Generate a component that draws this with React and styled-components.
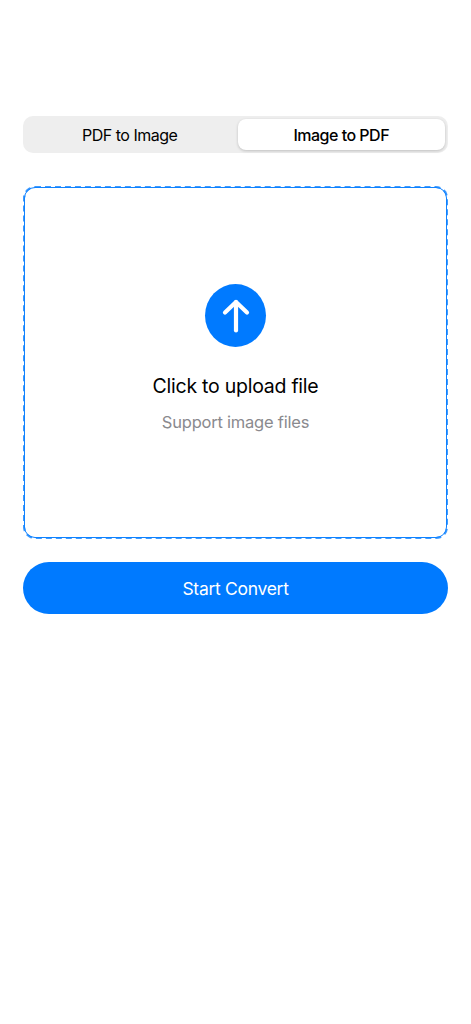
import React from "react";
import styled, { createGlobalStyle } from "styled-components";

const Global = createGlobalStyle`
  html, body { margin: 0; padding: 0; background: #fff; }
  body { font-family: Inter, "Liberation Sans", sans-serif; -webkit-font-smoothing: antialiased; }
`;

const Page = styled.div`
  box-sizing: border-box;
  width: 471px;
  height: 1024px;
  padding: 116px 23px 0;
  display: flex;
  flex-direction: column;
  background: #fff;
`;

const Tabs = styled.div`
  box-sizing: border-box;
  height: 37px;
  padding: 3px;
  display: grid;
  grid-template-columns: 1fr 1fr;
  gap: 4px;
  background: #eeeeee;
  border-radius: 10px;
`;

const Tab = styled.button`
  border: 0;
  padding: 0;
  height: 31px;
  border-radius: 8px;
  font-family: inherit;
  font-size: 16px;
  line-height: 32px;
  letter-spacing: -0.5px;
  font-weight: ${(p) => (p.$active ? 500 : 400)};
  color: #000;
  background: ${(p) => (p.$active ? "#fff" : "transparent")};
  box-shadow: ${(p) => (p.$active ? "0 1px 3px rgba(0,0,0,0.2)" : "none")};
`;

const Drop = styled.div`
  box-sizing: border-box;
  position: relative;
  margin-top: 33px;
  height: 353px;
  border: 2px dashed #3d9aff;
  border-radius: 12px;
  display: flex;
  flex-direction: column;
  align-items: center;
  padding-top: 96px;
  background: #fff;

  &::before {
    content: "";
    position: absolute;
    inset: -1px;
    border: 1px solid #0f82ff;
    border-radius: 11px;
    pointer-events: none;
  }
`;

const Circle = styled.div`
  width: 61px;
  height: 63px;
  border-radius: 50%;
  background: #007aff;
  display: flex;
  align-items: center;
  justify-content: center;
`;

const Title = styled.div`
  margin-top: 26px;
  font-size: 19.5px;
  line-height: 26px;
  letter-spacing: -0.25px;
  color: #000;
`;

const Sub = styled.div`
  margin-top: 12px;
  font-size: 16.5px;
  line-height: 22px;
  letter-spacing: -0.22px;
  color: #8a8a8e;
`;

const Primary = styled.button`
  margin-top: 23px;
  height: 52px;
  padding: 1px 0 0;
  border: 0;
  border-radius: 26px;
  background: #007aff;
  color: #fff;
  font-family: inherit;
  font-size: 17.5px;
  letter-spacing: -0.3px;
  font-weight: 400;
`;

export default function App() {
  return (
    <Page>
      <Global />
      <Tabs>
        <Tab>PDF to Image</Tab>
        <Tab $active>Image to PDF</Tab>
      </Tabs>
      <Drop>
        <Circle>
          <svg width="28" height="34" viewBox="0 0 28 34" fill="none" stroke="#fff" strokeWidth="4.2" strokeLinecap="round" strokeLinejoin="round">
            <path d="M14 31.5V3" />
            <path d="M3 13.5 14 3l11 10.5" />
          </svg>
        </Circle>
        <Title>Click to upload file</Title>
        <Sub>Support image files</Sub>
      </Drop>
      <Primary>Start Convert</Primary>
    </Page>
  );
}
